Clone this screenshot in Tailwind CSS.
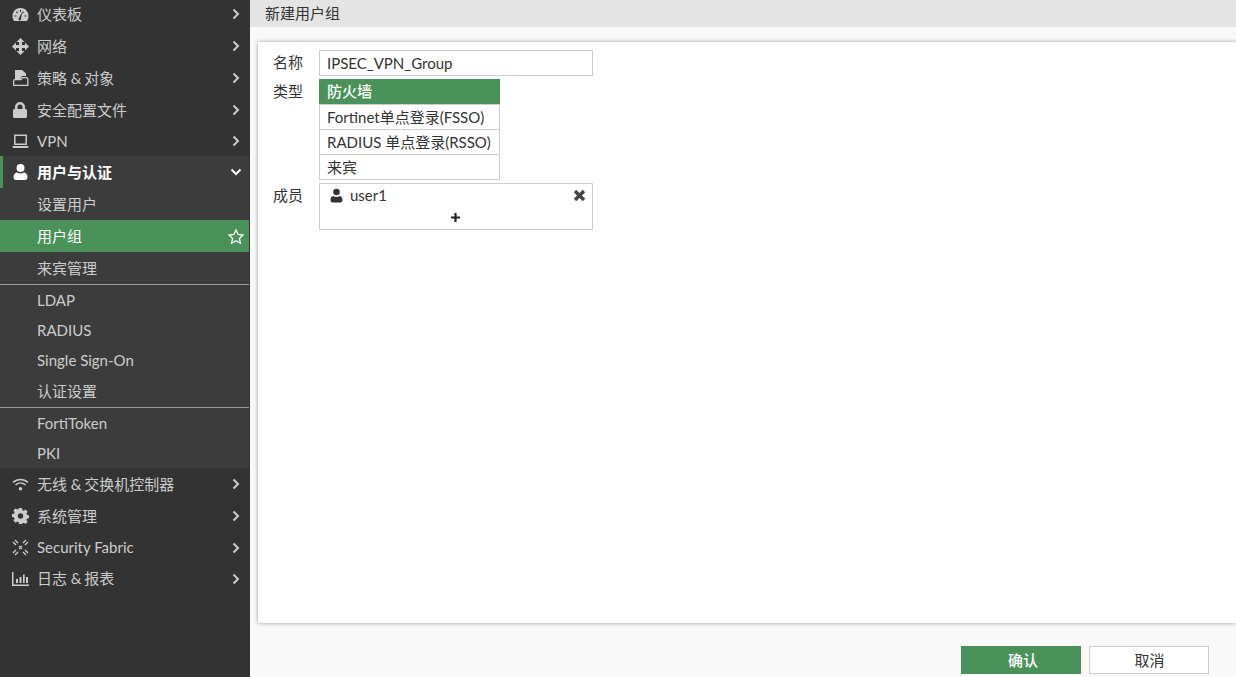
<!DOCTYPE html>
<html lang="en">
<head>
    <meta charset="UTF-8">
    <title>新建用户组</title>
    <script src="https://cdn.jsdelivr.net/npm/@tailwindcss/browser@4"></script>
</head>
<body class="overflow-hidden bg-[#f9f9f9] text-[15px] text-[#333] font-['Lato','Noto_Sans_CJK_SC',sans-serif]">
<div class="flex h-[677px] w-[1236px] overflow-hidden">

    <!-- Sidebar -->
    <aside class="w-[250px] shrink-0 bg-[#333] text-[#ccc] overflow-hidden">
        <div class="-mt-[2px]">
            <a class="flex items-center h-[32px] pl-[12px] pr-[10px]">
                <svg class="w-[17px] h-[15px] mr-[8px] shrink-0" viewBox="0 0 17 15"><path fill="#ccc" fill-rule="evenodd" d="M8.500 1C4 1 .5 4.500.5 9c0 2 .6 3.600 1.600 5h12.800c1-1.400 1.600-3 1.600-5 0-4.500-3.500-8-8-8zM8 3h1v2H8zM4 5l1-.7 1 1.500-.8.700zM2.500 8.500h2v1h-2zM12.500 8.500h2v1h-2zM11 4.300l1 .7-1.200 1.500-.8-.7zM7 11l2.500-5 .5.200L9 11.500a1.300 1.300 0 1 1-2-.5z"/></svg>
                <span class="flex-1">仪表板</span>
                <svg class="w-[8px] h-[12px]" viewBox="0 0 8 12"><path d="M1.500 1.500 6 6l-4.500 4.500" fill="none" stroke="#ccc" stroke-width="2"/></svg>
            </a>
            <a class="flex items-center h-[32px] pl-[12px] pr-[10px]">
                <svg class="w-[17px] h-[17px] mr-[8px] shrink-0" viewBox="0 0 17 17"><path fill="#ccc" d="M8.500 0 12.500 4H10V7h3V4.500L17 8.500 13 12.500V10H10v3h2.500L8.500 17 4.500 13H7V10H4v2.500L0 8.500 4 4.500V7H7V4H4.500z"/></svg>
                <span class="flex-1">网络</span>
                <svg class="w-[8px] h-[12px]" viewBox="0 0 8 12"><path d="M1.500 1.500 6 6l-4.500 4.500" fill="none" stroke="#ccc" stroke-width="2"/></svg>
            </a>
            <a class="flex items-center h-[32px] pl-[12px] pr-[10px]">
                <svg class="w-[17px] h-[16px] mr-[8px] shrink-0" viewBox="0 0 17 16"><path fill="#ccc" d="M3 0h7l4 3.500V6H10L8.500 9H3z"/><path fill="none" stroke="#ccc" stroke-width="1.300" d="M1.700 15.300V11c0-.8.400-1.300 1.300-1.300H9L10.500 7.700H14.500c.8 0 1.300.5 1.300 1.300v6.300z"/></svg>
                <span class="flex-1">策略 <span class="tracking-[-0.6px]">&amp; </span>对象</span>
                <svg class="w-[8px] h-[12px]" viewBox="0 0 8 12"><path d="M1.500 1.500 6 6l-4.500 4.500" fill="none" stroke="#ccc" stroke-width="2"/></svg>
            </a>
            <a class="flex items-center h-[32px] pl-[12px] pr-[10px]">
                <svg class="w-[17px] h-[16px] mr-[8px] shrink-0" viewBox="0 0 17 16"><path fill="#ccc" fill-rule="evenodd" d="M3 7V5a5 5 0 0 1 10 0v2h.500c.8 0 1.500.7 1.500 1.500V14.500c0 .8-.7 1.500-1.500 1.500h-11C1.700 16 1 15.300 1 14.500V8.500C1 7.700 1.700 7 2.500 7zm2.500 0h5V5a2.500 2.500 0 0 0-5 0z"/></svg>
                <span class="flex-1">安全配置文件</span>
                <svg class="w-[8px] h-[12px]" viewBox="0 0 8 12"><path d="M1.500 1.500 6 6l-4.500 4.500" fill="none" stroke="#ccc" stroke-width="2"/></svg>
            </a>
            <a class="flex items-center h-[30px] pl-[12px] pr-[10px]">
                <svg class="w-[17px] h-[15px] mr-[8px] shrink-0" viewBox="0 0 17 15"><path fill="none" stroke="#ccc" stroke-width="1.500" d="M2.800 1.300h11.400v9H2.800z"/><path fill="#ccc" d="M.5 12h16v1.200l-1 .8h-14l-1-.8z"/></svg>
                <span class="flex-1">VPN</span>
                <svg class="w-[8px] h-[12px]" viewBox="0 0 8 12"><path d="M1.500 1.500 6 6l-4.500 4.500" fill="none" stroke="#ccc" stroke-width="2"/></svg>
            </a>
        </div>

        <!-- Expanded section -->
        <div class="w-[249px] bg-[#3c3c3c]">
            <a class="flex items-center h-[32px] pl-[9px] pr-[7px] border-l-[3px] border-[#4a9259] -mb-px text-white font-bold">
                <svg class="w-[17px] h-[16px] mr-[8px] shrink-0" viewBox="0 0 17 16"><circle cx="8.500" cy="4" r="4" fill="#fff"/><path fill="#fff" d="M1.500 13c0-3 2-4.500 3.500-4.500 1 .7 2.200 1 3.500 1s2.500-.3 3.500-1c1.500 0 3.500 1.500 3.500 4.500 0 2-1 3-2.500 3H4c-1.500 0-2.500-1-2.500-3z"/></svg>
                <span class="flex-1">用户与认证</span>
                <svg class="w-[12px] h-[8px]" viewBox="0 0 12 8"><path d="M1.500 1.500 6 6l4.500-4.500" fill="none" stroke="#fff" stroke-width="2"/></svg>
            </a>
            <a class="flex items-center h-[32px] pl-[37px] mt-px">设置用户</a>
            <a class="flex items-center h-[32px] pl-[37px] pr-[5px] bg-[#4a9259] text-white">
                <span class="flex-1">用户组</span>
                <svg class="w-[16px] h-[15px]" viewBox="0 0 16 15"><path d="M8 1l2.100 4.500 4.900.6-3.600 3.300 1 4.800L8 11.800l-4.400 2.400 1-4.800L1 6.100l4.900-.6z" fill="none" stroke="#fff" stroke-width="1.300"/></svg>
            </a>
            <a class="flex items-center h-[32px] pl-[37px]">来宾管理</a>
            <div class="h-px bg-[#999]"></div>
            <a class="flex items-center h-[30px] pl-[37px]">LDAP</a>
            <a class="flex items-center h-[30px] pl-[37px]">RADIUS</a>
            <a class="flex items-center h-[30px] pl-[37px]">Single Sign-On</a>
            <a class="flex items-center h-[32px] pl-[37px]">认证设置</a>
            <div class="h-px bg-[#999]"></div>
            <a class="flex items-center h-[31px] pl-[37px]">FortiToken</a>
            <a class="flex items-center h-[29px] pl-[37px]">PKI</a>
        </div>

        <a class="flex items-center h-[32px] pl-[12px] pr-[10px]">
            <svg class="w-[17px] h-[13px] mr-[8px] shrink-0" viewBox="0 0 17 13"><path d="M1 4.500c4.300-4 10.700-4 15 0M3.500 7c3-2.700 7-2.700 10 0" fill="none" stroke="#ccc" stroke-width="1.600"/><circle cx="8.500" cy="10.800" r="1.800" fill="#ccc"/></svg>
            <span class="flex-1">无线 <span class="tracking-[-0.6px]">&amp; </span>交换机控制器</span>
            <svg class="w-[8px] h-[12px]" viewBox="0 0 8 12"><path d="M1.500 1.500 6 6l-4.500 4.500" fill="none" stroke="#ccc" stroke-width="2"/></svg>
        </a>
        <a class="flex items-center h-[32px] pl-[12px] pr-[10px]">
            <svg class="w-[17px] h-[16px] mr-[8px] shrink-0" viewBox="0 0 17 16"><path fill="#ccc" fill-rule="evenodd" d="M7 0h3l.4 2.200 1.300.6L13.600 1.600l2 2.200-1.200 1.800.6 1.300 2 .4v3l-2 .4-.6 1.300 1.200 1.800-2 2.200-1.900-1.200-1.300.6L10 16H7l-.4-1.800-1.300-.6-1.900 1.200-2-2.200 1.200-1.800-.6-1.300-2-.4v-3l2-.4.6-1.300-1.200-1.800 2-2.200 1.900 1.200 1.300-.6zM8.500 5.300a2.700 2.700 0 1 0 0 5.400 2.700 2.700 0 0 0 0-5.400z"/></svg>
            <span class="flex-1">系统管理</span>
            <svg class="w-[8px] h-[12px]" viewBox="0 0 8 12"><path d="M1.500 1.500 6 6l-4.500 4.500" fill="none" stroke="#ccc" stroke-width="2"/></svg>
        </a>
        <a class="flex items-center h-[31px] pl-[12px] pr-[10px]">
            <svg class="w-[17px] h-[17px] mr-[8px] shrink-0" viewBox="0 0 17 17"><path d="M1 3l3 3M3 1l3 3M16 3l-3 3M14 1l-3 3M1 14l3-3M3 16l3-3M16 14l-3-3M14 16l-3-3M7 7l3 3M10 7 7 10" fill="none" stroke="#ccc" stroke-width="1.300"/></svg>
            <span class="flex-1">Security Fabric</span>
            <svg class="w-[8px] h-[12px]" viewBox="0 0 8 12"><path d="M1.500 1.500 6 6l-4.500 4.500" fill="none" stroke="#ccc" stroke-width="2"/></svg>
        </a>
        <a class="flex items-center h-[31px] pl-[12px] pr-[10px]">
            <svg class="w-[17px] h-[14px] mr-[8px] shrink-0" viewBox="0 0 17 14"><path fill="#ccc" d="M0 0h1.500v12.500H17V14H0zM4 7h2v4H4zM7.500 5h2v6h-2zM11 2.500h1.700V11H11zM14 5h2v6h-2z"/></svg>
            <span class="flex-1">日志 <span class="tracking-[-0.6px]">&amp; </span>报表</span>
            <svg class="w-[8px] h-[12px]" viewBox="0 0 8 12"><path d="M1.500 1.500 6 6l-4.500 4.500" fill="none" stroke="#ccc" stroke-width="2"/></svg>
        </a>
    </aside>

    <!-- Main -->
    <main class="flex-1 flex flex-col min-w-0">
        <div class="h-[27px] bg-[#e4e4e4] flex items-center pl-[15px]">新建用户组</div>

        <div class="mt-[15px] ml-[8px] h-[581px] bg-white shadow-[0_0_4px_rgba(0,0,0,0.4)] pt-[8px] pl-[15px]">
            <div class="flex items-center h-[26px]">
                <label class="w-[46px] -mt-[2px]">名称</label>
                <div class="w-[274px] h-[26px] border border-[#ccc] flex items-center pl-[7px]">IPSEC_VPN_Group</div>
            </div>
            <div class="flex mt-[3px]">
                <label class="w-[46px] leading-[25px]">类型</label>
                <div class="w-[181px]">
                    <div class="h-[25px] bg-[#4a9259] text-white flex items-center pl-[8px] font-medium">防火墙</div>
                    <div class="h-[25px] border-x border-t border-[#ccc] flex items-center pl-[7px] whitespace-nowrap">Fortinet单点登录(FSSO)</div>
                    <div class="h-[25px] border-x border-t border-[#ccc] flex items-center pl-[7px] whitespace-nowrap">RADIUS 单点登录(RSSO)</div>
                    <div class="h-[26px] border-x border-y border-[#ccc] flex items-center pl-[7px]">来宾</div>
                </div>
            </div>
            <div class="flex mt-[3px]">
                <label class="w-[46px] leading-[25px]">成员</label>
                <div class="w-[274px] h-[47px] border border-[#ccc]">
                    <div class="flex items-center h-[23px] pl-[10px] pr-[6px]">
                        <svg class="w-[13px] h-[15px] mr-[7px]" viewBox="0 0 13 14"><circle cx="6.500" cy="3.500" r="3.300" fill="#333"/><path fill="#333" d="M.5 11.500c0-2.500 1.500-4 3-4 .8.600 1.800 1 3 1s2.200-.4 3-1c1.500 0 3 1.500 3 4 0 1.500-.8 2.500-2 2.500h-8c-1.200 0-2-1-2-2.500z"/></svg>
                        <span class="flex-1">user1</span>
                        <svg class="w-[13px] h-[13px] -mt-px" viewBox="0 0 13 13"><path d="M2 2l9 9M11 2l-9 9" stroke="#444" stroke-width="3.400"/></svg>
                    </div>
                    <div class="flex justify-center mt-[6px] pr-[2px]">
                        <svg class="w-[9px] h-[9px]" viewBox="0 0 9 9"><path d="M4.500 0v9M0 4.500h9" stroke="#222" stroke-width="2.200"/></svg>
                    </div>
                </div>
            </div>
        </div>

        <div class="mt-[23px] flex justify-end gap-[8px] pr-[27px]">
            <button class="w-[120px] h-[28px] bg-[#4a9259] text-white pl-[4px] font-medium">确认</button>
            <button class="w-[120px] h-[28px] bg-white border border-[#ccc] pl-[1px]">取消</button>
        </div>
    </main>
</div>
</body>
</html>
